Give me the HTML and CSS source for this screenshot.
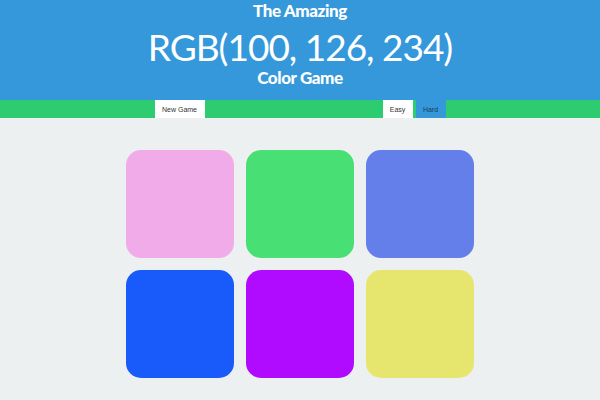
FILE: index.html
```html
<!DOCTYPE html>
<html>
<head>
<meta charset="utf-8">
<link rel="stylesheet" href="styles.css">
</head>
<body>
<h1 class="title">
  <span class="line-small">The Amazing</span>
  <span class="line-big">RGB(100, 126, 234)</span>
  <span class="line-small line-last">Color Game</span>
</h1>
<nav class="stripe">
  <div class="stripe-inner">
    <button class="btn btn-new">New Game</button>
    <div class="modes">
      <button class="btn">Easy</button>
      <button class="btn selected">Hard</button>
    </div>
  </div>
</nav>
<main class="board">
  <div class="square sq1"></div>
  <div class="square sq2"></div>
  <div class="square sq3"></div>
  <div class="square sq4"></div>
  <div class="square sq5"></div>
  <div class="square sq6"></div>
</main>
</body>
</html>
```
FILE: styles.css
```css
html, body {
  margin: 0;
  padding: 0;
  background: #ecf0f1;
  font-family: Lato, "Open Sans", sans-serif;
}
.title {
  margin: 0;
  background: #3498db;
  color: #fff;
  text-align: center;
  height: 100px;
  box-sizing: border-box;
  overflow: hidden;
}
.line-small {
  display: block;
  font-size: 17px;
  font-weight: 900;
  letter-spacing: -0.4px;
  line-height: 21px;
}
.line-last {
  margin-top: -1px;
  line-height: 20px;
}
.line-big {
  display: block;
  font-size: 37px;
  font-weight: 400;
  letter-spacing: -1px;
  line-height: 44px;
  padding-top: 4px;
}
.stripe {
  background: #2ecc71;
  height: 18px;
}
.stripe-inner {
  width: 291px;
  margin: 0 auto;
  display: flex;
  justify-content: space-between;
  height: 18px;
}
.modes {
  display: flex;
  gap: 3px;
}
.btn {
  border: none;
  margin: 0;
  padding: 0;
  background: #fff;
  color: #333;
  font-family: "Liberation Sans", Arial, sans-serif;
  font-size: 7px;
  height: 18px;
  width: 30px;
  white-space: nowrap;
}
.btn-new {
  width: 50px;
}
.btn.selected {
  background: #3498db;
  color: #1d3b5a;
}
.board {
  width: 348px;
  margin: 32px auto 0;
  display: grid;
  grid-template-columns: repeat(3, 108px);
  gap: 12px;
}
.square {
  height: 108px;
  border-radius: 15px;
}
.sq1 { background: #f0abe8; }
.sq2 { background: #48e074; }
.sq3 { background: #647eea; }
.sq4 { background: #195afa; }
.sq5 { background: #b00aff; }
.sq6 { background: #e6e66e; }
```
